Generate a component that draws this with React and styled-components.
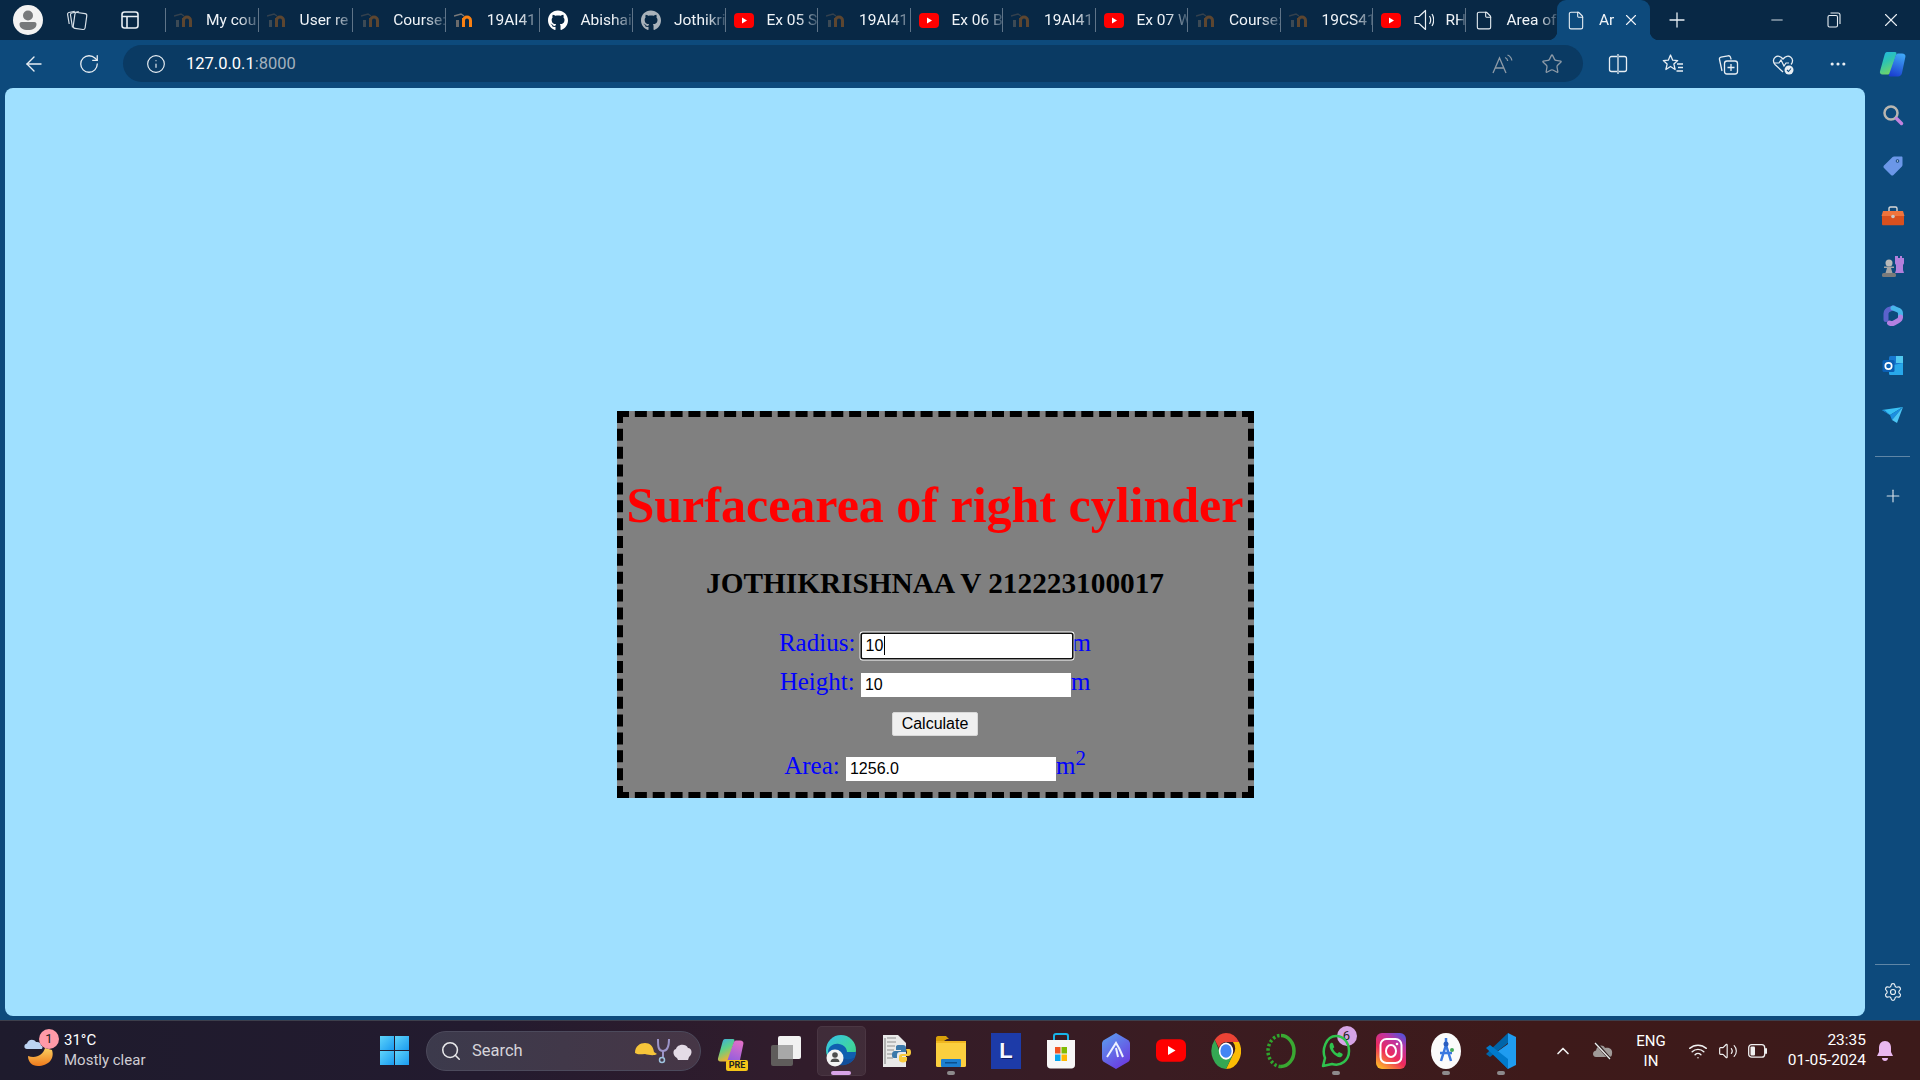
import React from "react";
import styled, { createGlobalStyle } from "styled-components";
import {
  ArrowLeft, RotateCw, Info, Star, Plus, X, Minus, Settings, Search, ChevronUp,
  Wifi, Volume2, File, Ellipsis,
} from "lucide-react";
import { FaGithub } from "react-icons/fa";

const GlobalStyle = createGlobalStyle`
  html, body { margin: 0; padding: 0; height: 100%; overflow: hidden; }
  body { font-family: Roboto, "Liberation Sans", sans-serif; background: #0d4a7c; }
`;

const Page = styled.div`
  width: 1920px;
  height: 1080px;
  display: flex;
  flex-direction: column;
`;

/* ---- tab strip ---- */
const TabStrip = styled.div`
  height: 40px;
  background: #082845;
  display: flex;
  align-items: stretch;
  flex: none;
`;

const StripTools = styled.div`
  width: 164.5px;
  flex: none;
  display: flex;
  align-items: center;
  padding-left: 13px;
  box-sizing: border-box;
`;

const ProfileButton = styled.div`
  width: 30px;
  height: 30px;
  border-radius: 50%;
  background: #f3f3f3;
  display: flex;
  align-items: center;
  justify-content: center;
`;

const StripTool = styled.div`
  display: flex;
  align-items: center;
  justify-content: center;
  width: 24px;
  margin-left: ${(p) => p.$gap}px;
`;

const Tab = styled.div`
  width: ${(p) => p.$width ?? 92.5}px;
  flex: none;
  box-sizing: border-box;
  display: flex;
  align-items: center;
  padding-left: 9px;
  position: relative;
  color: #f0f4f8;
  font-size: 15.5px;

  &::before {
    content: "";
    position: absolute;
    left: 0;
    top: 8px;
    bottom: 8px;
    width: 1px;
    background: #5f7488;
  }
`;

const TabIcon = styled.span`
  width: 20px;
  height: 20px;
  flex: none;
  display: flex;
  align-items: center;
  justify-content: center;
  margin-right: ${(p) => p.$gap ?? 12.5}px;
`;

const TabLabel = styled.span`
  white-space: nowrap;
  overflow: hidden;
  flex: 1;
  min-width: 0;
  -webkit-mask-image: linear-gradient(to right, #000 62%, rgba(0, 0, 0, 0.25) 98%);
  mask-image: linear-gradient(to right, #000 62%, rgba(0, 0, 0, 0.25) 98%);
`;

const ActiveTab = styled.div`
  width: 93px;
  flex: none;
  box-sizing: border-box;
  background: #0d4a7c;
  border-radius: 9px 9px 0 0;
  display: flex;
  align-items: center;
  padding: 0 10px 0 9px;
  position: relative;
  color: #f0f4f8;
  font-size: 15.5px;

  &::before, &::after {
    content: "";
    position: absolute;
    bottom: 0;
    width: 9px;
    height: 9px;
  }
  &::before {
    left: -9px;
    background: radial-gradient(circle at 0 0, transparent 9px, #0d4a7c 9.5px);
  }
  &::after {
    right: -9px;
    background: radial-gradient(circle at 100% 0, transparent 9px, #0d4a7c 9.5px);
  }
`;

const NewTab = styled.div`
  width: 54px;
  flex: none;
  display: flex;
  align-items: center;
  justify-content: center;
`;

const WindowControls = styled.div`
  margin-left: auto;
  display: flex;
  padding-right: 1px;
`;

const WindowControl = styled.div`
  width: 57px;
  display: flex;
  align-items: center;
  justify-content: center;
`;

/* ---- address bar ---- */
const Toolbar = styled.div`
  height: 48px;
  flex: none;
  display: flex;
  align-items: center;
  background: #0d4a7c;
  padding-left: 7px;
  box-sizing: border-box;
`;

const NavButton = styled.div`
  width: 56px;
  display: flex;
  align-items: center;
  justify-content: center;
`;

const AddressBar = styled.div`
  width: 1460px;
  height: 37px;
  margin-left: 7px;
  margin-top: -1px;
  border-radius: 19px;
  background: #0a3a63;
  display: flex;
  align-items: center;
  padding: 0 20px 0 23px;
  box-sizing: border-box;
  flex: none;
`;

const Url = styled.span`
  margin-left: 20px;
  font-size: 16.5px;
  color: #fff;
`;

const UrlPort = styled.span`
  color: #a3b1bd;
`;

const AddressActions = styled.div`
  margin-left: auto;
  display: flex;
  align-items: center;
  gap: 27px;
`;

const ReadAloud = styled.span`
  width: 22px;
  display: flex;
  justify-content: center;
`;

const ToolbarButtons = styled.div`
  display: flex;
  align-items: center;
  margin-left: 7px;
`;

const ToolbarButton = styled.div`
  width: 55px;
  display: flex;
  align-items: center;
  justify-content: center;
`;

/* ---- main area ---- */
const Main = styled.div`
  flex: 1;
  display: flex;
  min-height: 0;
`;

const Viewport = styled.div`
  margin: 0 0 4px 5px;
  width: 1860px;
  flex: none;
  background: #9fe0ff;
  border-radius: 8px;
  padding-top: 323px;
  box-sizing: border-box;
`;

const Card = styled.div`
  width: 637px;
  margin: 0 auto;
  box-sizing: border-box;
  border: 6px dashed #000;
  background: #808080;
  padding: 59px 0 11px;
  text-align: center;
  font-family: "Liberation Serif", "Times New Roman", serif;
`;

const Title = styled.h1`
  margin: 0;
  font-size: 50px;
  line-height: 58px;
  font-weight: bold;
  color: #f00;
  white-space: nowrap;
`;

const Student = styled.h2`
  margin: 32px 0 0;
  font-size: 29.3px;
  line-height: 34px;
  font-weight: bold;
  color: #000;
`;

const FieldRow = styled.div`
  display: flex;
  justify-content: center;
  align-items: baseline;
  margin-top: ${(p) => p.$top}px;
  color: #00f;
  font-size: 25px;
  line-height: 28px;
`;

const FieldLabel = styled.label`
  margin-right: 6.25px;
`;

const FieldBox = styled.span`
  position: relative;
  display: inline-flex;
  align-items: baseline;
`;

const Field = styled.input`
  width: 210px;
  height: 24px;
  box-sizing: border-box;
  border: none;
  padding: 1px 4px;
  margin: 0;
  background: #fff;
  color: #000;
  border-radius: 0;
  font-family: "Liberation Sans", Arial, sans-serif;
  font-size: 16px;
  outline: none;
  ${(p) => p.$focused && `
    border-radius: 1px;
    box-shadow: 0 0 0 1.6px #101010, 0 0 0 2.4px #fff;
    caret-color: transparent;
  `}
`;

const Caret = styled.span`
  position: absolute;
  left: 22px;
  top: 2px;
  width: 1px;
  height: 19px;
  background: #000;
`;

const Super = styled.sup`
  line-height: 0;
  vertical-align: super;
  font-size: 20.8px;
`;

const CalcRow = styled.div`
  margin-top: 15px;
  display: flex;
  justify-content: center;
`;

const CalcButton = styled.button`
  width: 86px;
  height: 24px;
  padding: 0;
  box-sizing: border-box;
  border: 1px solid #d8d8d8;
  border-radius: 2px;
  background: #efefef;
  color: #000;
  font-family: "Liberation Sans", Arial, sans-serif;
  font-size: 16px;
`;

/* ---- edge sidebar ---- */
const Sidebar = styled.div`
  width: 55px;
  flex: none;
  display: flex;
  flex-direction: column;
  align-items: center;
  padding: 3px 0 3px;
  box-sizing: border-box;
`;

const SideItem = styled.div`
  height: 50px;
  width: 100%;
  flex: none;
  display: flex;
  align-items: center;
  justify-content: center;
`;

const SideRule = styled.div`
  width: 35px;
  height: 1px;
  background: #5f86a6;
  flex: none;
  margin: ${(p) => p.$margin};
`;

/* ---- taskbar ---- */
const Taskbar = styled.div`
  height: 60px;
  flex: none;
  box-sizing: border-box;
  border-top: 1px solid #3d3f4c;
  background: linear-gradient(90deg, #1e1b2d 0%, #231b2f 25%, #301c2c 40%, #3a1c22 60%, #3e1a1a 80%, #3c1a1a 100%);
  display: flex;
  align-items: center;
  padding-left: 24px;
  color: #fff;
`;

const Weather = styled.div`
  width: 356px;
  flex: none;
  display: flex;
  align-items: center;
`;

const WeatherIcon = styled.div`
  width: 32px;
  height: 36px;
  flex: none;
  position: relative;
`;

const Badge = styled.span`
  position: absolute;
  top: ${(p) => p.$top}px;
  right: ${(p) => p.$right}px;
  width: 20px;
  height: 20px;
  border-radius: 50%;
  background: ${(p) => p.$color};
  color: #222;
  font-size: 13px;
  line-height: 20px;
  text-align: center;
`;

const WeatherText = styled.div`
  margin: -2px 0 0 8px;
  font-size: 15px;
  line-height: 20px;
`;

const WeatherNote = styled.div`
  color: #cfcdd3;
`;

const StartButton = styled.div`
  width: 29px;
  height: 29px;
  flex: none;
  display: grid;
  grid-template-columns: 1fr 1fr;
  gap: 1.5px;
`;

const StartPane = styled.span`
  background: linear-gradient(135deg, #5fd4fa, #1a9bf0);
`;

const SearchPill = styled.div`
  width: 275px;
  height: 40px;
  flex: none;
  margin-left: 17px;
  box-sizing: border-box;
  border-radius: 20px;
  border: 1px solid #4c4a5c;
  background: linear-gradient(90deg, #3c3a4c, #463646);
  display: flex;
  align-items: center;
  padding-left: 13px;
  color: #d6d4da;
  font-size: 16.5px;
`;

const SearchText = styled.span`
  margin-left: 10px;
`;

const SearchDoodle = styled.span`
  margin-left: auto;
  margin-right: 5px;
  display: flex;
`;

const Dock = styled.div`
  display: flex;
  margin-left: 2.5px;
`;

const DockSlot = styled.div`
  width: 55px;
  height: 50px;
  flex: none;
  display: flex;
  align-items: center;
  justify-content: center;
  position: relative;

  & > svg {
    position: relative;
    z-index: 1;
  }
  ${(p) => p.$active && `
    &::before {
      content: "";
      position: absolute;
      left: 3px;
      right: 3px;
      top: 0;
      bottom: 0;
      background: rgba(255, 255, 255, 0.07);
      border: 1px solid rgba(255, 255, 255, 0.05);
      border-radius: 5px;
    }
  `}
  ${(p) => (p.$active || p.$running) && `
    &::after {
      content: "";
      position: absolute;
      left: 50%;
      bottom: 1px;
      height: 4px;
      border-radius: 2px;
      width: ${p.$active ? 20 : 8}px;
      margin-left: ${p.$active ? -10 : -4}px;
      background: ${p.$active ? "#d9a4e8" : "#8d8a8c"};
    }
  `}
`;

const PreWrap = styled.span`
  position: relative;
  display: flex;
`;

const PreTag = styled.span`
  position: absolute;
  right: -2px;
  bottom: -5px;
  width: 22px;
  height: 11px;
  background: #f5c518;
  color: #222;
  border-radius: 2px;
  font-size: 9px;
  font-weight: 700;
  line-height: 11px;
  text-align: center;
`;

const LetterTile = styled.span`
  width: 30px;
  height: 36px;
  background: #1d3ba8;
  color: #f6f8ff;
  font-family: "Liberation Sans", Arial, sans-serif;
  font-weight: 700;
  font-size: 22px;
  line-height: 36px;
  text-align: center;
  text-shadow: 1px 1px 0 #0b1c66;
`;

const Tray = styled.div`
  margin-left: auto;
  display: flex;
  align-items: center;
  padding-right: 16px;
`;

const TraySlot = styled.div`
  width: ${(p) => p.$width}px;
  flex: none;
  display: flex;
  align-items: center;
  justify-content: center;
`;

const TrayText = styled.div`
  width: 56px;
  margin-right: 4px;
  flex: none;
  text-align: center;
  font-size: 15px;
  line-height: 20px;
`;

const Clock = styled.div`
  width: 93px;
  margin-top: -2px;
  flex: none;
  text-align: right;
  font-size: 15.5px;
  line-height: 20px;
`;

/* ---- drawn icons ---- */
const MoodleIcon = ({ bright }) => (
  <svg width="20" height="16" viewBox="0 0 20 16" fill="none">
    <path d="M3.5 15V8" stroke={bright ? "#6b6b6b" : "#3c4a55"} strokeWidth="3" />
    <path d="M0 4l7-2 3 2" stroke={bright ? "#7a7a7a" : "#34414d"} strokeWidth="1.4" />
    <path d="M9.500 15V8.500a3.500 3.500 0 0 1 7 0V15" stroke={bright ? "#f98012" : "#5d4630"} strokeWidth="3" />
    <path d="M9.500 6V15" stroke={bright ? "#f98012" : "#5d4630"} strokeWidth="3" />
  </svg>
);

const YoutubeIcon = ({ w = 20, h = 15 }) => (
  <svg width={w} height={h} viewBox="0 0 20 15">
    <rect width="20" height="15" rx="4" fill="#f00" />
    <path d="M8 4.5v6l5-3z" fill="#fff" />
  </svg>
);

const SpeakerIcon = () => (
  <svg width="20" height="22" viewBox="0 0 20 22" fill="none" stroke="#e8eef3" strokeWidth="1.2">
    <path d="M1 7.500h4L11.500 1.500v19L5 14.500H1z" strokeLinejoin="round" />
    <path d="M15.500 7c1.500 2.500 1.500 5.500 0 8" />
    <path d="M18 5c2 3.500 2 8.500 0 12" />
  </svg>
);

const RestoreIcon = () => (
  <svg width="14" height="16" viewBox="0 0 14 16" fill="none" stroke="#e8eef3" strokeWidth="1.1">
    <rect x="1" y="3.5" width="9.5" height="11.5" rx="1.5" />
    <path d="M3.5 1h7.5a2 2 0 0 1 2 2v9" />
  </svg>
);

const CollectionsIcon = () => (
  <svg width="22" height="24" viewBox="0 0 22 24" fill="none" stroke="#d7e0e8" strokeWidth="1.2">
    <rect x="8" y="5" width="12" height="16" rx="2" transform="rotate(8 14 13)" />
    <path d="M6.5 19.5L4.5 7c-.2-1 .4-1.8 1.3-2l7-1.3" />
    <path d="M3.2 16L1.6 6.4c-.2-1 .3-1.7 1.2-1.9l6-1.2" />
  </svg>
);

const VerticalTabsIcon = () => (
  <svg width="20" height="20" viewBox="0 0 20 20" fill="none" stroke="#e8eef3" strokeWidth="1.6">
    <rect x="2" y="2" width="16" height="16" rx="2.5" />
    <path d="M2 6.5h16M7 6.5V18" />
  </svg>
);

const ProfileGlyph = () => (
  <svg width="20" height="22" viewBox="0 0 20 22" fill="#77797b">
    <circle cx="10" cy="6.5" r="5" />
    <path d="M1.5 15c0-1.2 1-2 2.2-2h12.6c1.2 0 2.2.8 2.2 2 0 4-3.6 6-8.5 6s-8.5-2-8.5-6z" />
  </svg>
);

const ReadAloudIcon = () => (
  <svg width="22" height="20" viewBox="0 0 22 20" fill="none" stroke="#8d9aa7" strokeWidth="1.3">
    <path d="M1 19L7.5 4 14 19M3.5 14h8" />
    <path d="M13 3.5c1.5.5 2.5 2 2.7 3.5M15.5 1c2.4 1 4 3 4.3 5.5" />
  </svg>
);

const SplitIcon = () => (
  <svg width="20" height="22" viewBox="0 0 20 22" fill="none" stroke="#e8eef3" strokeWidth="1.3">
    <path d="M9 3.5H3.5a2 2 0 0 0-2 2v11a2 2 0 0 0 2 2H9M11 3.5h5.5a2 2 0 0 1 2 2v11a2 2 0 0 1-2 2H11" />
    <path d="M10 1v20" />
  </svg>
);

const FavoritesIcon = () => (
  <svg width="22" height="22" viewBox="0 0 22 22" fill="none" stroke="#e8eef3" strokeWidth="1.3">
    <path d="M8.5 2l2.2 5.2 5 .4-3.8 3.5 1.2 5.4-4.6-3-4.6 3 1.2-5.4L1.3 7.6l5-.4z" strokeLinejoin="round" />
    <path d="M15 11h6M16 14.5h5M14.5 18h6.5" />
  </svg>
);

const CollectionAddIcon = () => (
  <svg width="22" height="22" viewBox="0 0 22 22" fill="none" stroke="#e8eef3" strokeWidth="1.3">
    <path d="M5 18L2.5 6.5c-.3-1.2.4-2.2 1.5-2.4l7-1.3c1-.2 2 .3 2.4 1.3l.8 2.4" />
    <rect x="7.5" y="8" width="13" height="13" rx="2.5" />
    <path d="M14 11v7M10.5 14.5h7" />
  </svg>
);

const HealthIcon = () => (
  <svg width="22" height="22" viewBox="0 0 22 22" fill="none">
    <path d="M11 19L3 11.5C.8 9.3 1 5.8 3.2 4.2c2.3-1.7 5.500-1 7.800 1.800 2.300-2.800 5.500-3.500 7.800-1.800 2.200 1.600 2.400 5.100.2 7.300" stroke="#e8eef3" strokeWidth="1.3" />
    <path d="M2 10h5l2-3 3 6 2-3h3" stroke="#e8eef3" strokeWidth="1.2" />
    <circle cx="17" cy="17" r="4.5" fill="#e8eef3" />
    <path d="M15 17l1.5 1.500 2.500-3" stroke="#0d4a7c" strokeWidth="1.1" />
  </svg>
);

const CopilotLogo = ({ id, size = 30, left, right }) => (
  <svg width={size} height={size} viewBox="0 0 30 30">
    <defs>
      <linearGradient id={`${id}a`} x1="0" y1="0" x2="0.4" y2="1">
        {left.map((c, i) => <stop key={c} offset={i / (left.length - 1)} stopColor={c} />)}
      </linearGradient>
      <linearGradient id={`${id}b`} x1="0.6" y1="0" x2="0.3" y2="1">
        {right.map((c, i) => <stop key={c} offset={i / (right.length - 1)} stopColor={c} />)}
      </linearGradient>
    </defs>
    <path d="M9 3h8c1.500 0 1.800 1 1.300 2.300L13 23c-.6 1.800-1.500 2.500-3 2.500H4.500C2.500 25.500 1.500 24 2 22.300L6.500 6C7 4 7.800 3 9 3z" fill={`url(#${id}a)`} />
    <path d="M20 4.500h4c2.500 0 3.800 1.300 3.400 3.200L24 24c-.5 2.300-2 3.500-4 3.500h-8c-1.200 0-1.500-.8-1-2L17.500 7c.5-1.500 1.300-2.500 2.500-2.500z" fill={`url(#${id}b)`} />
  </svg>
);

const SideSearch = () => (
  <svg width="22" height="22" viewBox="0 0 22 22" fill="none">
    <circle cx="9" cy="8" r="6.5" stroke="#b9b6b0" strokeWidth="2.5" />
    <path d="M14.5 13.5l5 5" stroke="#c283de" strokeWidth="3.5" strokeLinecap="round" />
  </svg>
);

const SideTag = () => (
  <svg width="22" height="22" viewBox="0 0 22 22">
    <path d="M12 1.500h7.500c.6 0 1 .4 1 1v7.500c0 .5-.2 1-.6 1.400L11.500 20c-.8.8-1.800.8-2.500 0l-7-7c-.7-.7-.7-1.800 0-2.500l8.600-8.500c.4-.3.9-.5 1.400-.5z" fill="#6b97e8" />
    <circle cx="15.5" cy="6" r="1.8" fill="#14467a" />
    <circle cx="15.5" cy="6" r="0.8" fill="#d7e6ff" />
  </svg>
);

const SideToolbox = () => (
  <svg width="24" height="20" viewBox="0 0 24 20">
    <path d="M8 5V2.500C8 1.500 8.700 1 9.500 1h5c.8 0 1.500.5 1.500 1.500V5" fill="none" stroke="#d8d8d8" strokeWidth="1.4" />
    <path d="M2 5h20l1.500 5H.5z" fill="#f0743c" />
    <path d="M1 10h22v8c0 .8-.5 1.300-1.300 1.300H2.300C1.500 19.300 1 18.800 1 18z" fill="#d9501e" />
    <circle cx="12" cy="10.5" r="1.8" fill="#c9c9c9" />
  </svg>
);

const SideChess = () => (
  <svg width="24" height="24" viewBox="0 0 24 24">
    <path d="M15 2h2v2h2V2h2v2h2V1v8c0 1-.8 1.500-1 2v5l1 3h-9l1-3v-5c-.3-.5-1-1-1-2V2z" fill="#b27fdc" />
    <circle cx="8" cy="9" r="3.5" fill="#b9b9b9" />
    <path d="M3 12.500h10v1.500H3zM6 14h4l1.500 5h-7z" fill="#a5a5a5" />
    <rect x="1" y="19" width="14" height="4" rx="1.5" fill="#7a7a7a" />
  </svg>
);

const SideDesigner = () => (
  <svg width="22" height="22" viewBox="0 0 22 22" fill="none" strokeWidth="5" strokeLinecap="round">
    <path d="M4 14.500V8.500C4 6 6 4.500 8.500 3.800l3-1" stroke="#5b62cc" />
    <path d="M11 3l5.500 2.200C18 6 18.500 7 18.500 8.500V11" stroke="#47b6ea" />
    <path d="M18.500 12c0 2-1 3-2.500 3.800L12 18c-1.500.8-3 .8-4.500 0" stroke="#b480e2" />
  </svg>
);

const SideOutlook = () => (
  <svg width="22" height="22" viewBox="0 0 22 22">
    <rect x="7" y="1" width="14" height="19" rx="1.5" fill="#1777cf" />
    <path d="M7 11l14-3v12H8.500C7.700 20 7 19.300 7 18.500z" fill="#28a8ea" />
    <path d="M14 1h7v7h-7z" fill="#50c8f0" />
    <rect x="0.5" y="5" width="12" height="12" rx="1.5" fill="#0a5fb4" />
    <circle cx="6.5" cy="11" r="3.2" fill="none" stroke="#fff" strokeWidth="1.7" />
  </svg>
);

const SideSend = () => (
  <svg width="22" height="18" viewBox="0 0 22 18">
    <path d="M0 3l21-3-13 8z" fill="#38c0f4" />
    <path d="M21 0L8 8l2 5z" fill="#1c8fe0" />
    <path d="M21 0l-6 16-5-3z" fill="#4cc6f5" />
    <path d="M8 8L3 3.500 0 3z" fill="#1470c0" />
  </svg>
);

const WeatherGlyph = () => (
  <svg width="32" height="36" viewBox="0 0 32 36">
    <defs>
      <linearGradient id="moon" x1="0" y1="0" x2="0" y2="1">
        <stop offset="0" stopColor="#fbd060" />
        <stop offset="1" stopColor="#ee7a1c" />
      </linearGradient>
    </defs>
    <path d="M4 23C12 26 19 22 21 15L28 17C31 26 24 33 14 33 8 33 4 29 4 23z" fill="url(#moon)" />
    <path d="M3 16c-3.500 0-3.500-5 0-5.500C4 6 10 5.500 12 9c3-.5 5 1 5 3.500 2 .5 2 3.500 0 3.500z" fill="#bcd3f2" />
  </svg>
);

const Doodle = () => (
  <svg width="62" height="26" viewBox="0 0 62 26" fill="none">
    <path d="M2 15c0-7 5-10 10-10s8 3 9 9l3 2c-3 2-8 1-12 0-4 0-7 1-10-1z" fill="#f6c53a" />
    <path d="M25 1c0 7 0 12 5 12s6-6 6-12" stroke="#9c94c8" strokeWidth="2" />
    <path d="M30 13v6" stroke="#9c94c8" strokeWidth="2" />
    <circle cx="29" cy="22" r="2.5" stroke="#9ec3de" strokeWidth="1.5" />
    <path d="M44 20c-4-2-5-8-1-9 1-5 10-6 12-1 4 0 5 6 1 9l-1 3H45z" fill="#e4dbe6" />
  </svg>
);

const TaskViewIcon = () => (
  <svg width="30" height="30" viewBox="0 0 30 30">
    <rect x="0" y="9" width="22" height="21" rx="2" fill="#5f5c5b" />
    <rect x="7" y="0" width="23" height="23" rx="2" fill="#f2f2f2" />
    <rect x="7" y="9" width="15" height="14" fill="#a8a8a8" />
  </svg>
);

const EdgeIcon = () => (
  <svg width="30" height="32" viewBox="0 0 30 32">
    <defs>
      <linearGradient id="edge" x1="0" y1="0" x2="1" y2="1">
        <stop offset="0" stopColor="#34c1ed" />
        <stop offset="0.6" stopColor="#3fd4a0" />
        <stop offset="1" stopColor="#2ec27e" />
      </linearGradient>
    </defs>
    <circle cx="15" cy="15" r="15" fill="url(#edge)" />
    <path d="M2 16c1-5 6-8 11-7 6 1 8 5 8 8H30c0 8-6 13-15 13C7 30 2 24 2 16z" fill="#0f5fb0" />
    <path d="M13 30c5 1 13-1 16-8-4 3-9 3-12 1z" fill="#124f9c" />
    <circle cx="9" cy="23" r="8.5" fill="#f3f3f3" />
    <circle cx="9" cy="20" r="2.8" fill="#4d4d4d" />
    <path d="M4.500 27c0-2.500 2-3.500 4.500-3.500s4.500 1 4.500 3.500z" fill="#4d4d4d" />
  </svg>
);

const PythonFileIcon = () => (
  <svg width="30" height="32" viewBox="0 0 30 32">
    <path d="M2 0h15l8 8v24H2z" fill="#e9e9e9" />
    <path d="M4 3v26M6 3h9M6 7h9M6 11h8M6 15h7M6 19h6M6 23h6" stroke="#8f8f8f" strokeWidth="1.2" />
    <path d="M17 10h5c2 0 3 1 3 3v4h-6c-2 0-3 1-3 3v3h-3c-1.500 0-2-1-2-3 0-3 1-4 3-4h6v-1h-5v-3c0-1 .5-2 2-2z" fill="#3b79ab" />
    <path d="M25 14h3c1.500 0 2 1.500 2 3.500s-1 3.500-3 3.500h-6v1h5v3c0 1.500-2 2.500-4 2.500s-4-1-4-2.500V22c0-2 1-3 3-3h4c1 0 1-1 1-2z" fill="#f8ca3c" />
  </svg>
);

const ExplorerIcon = () => (
  <svg width="30" height="32" viewBox="0 0 30 32">
    <path d="M0 3c0-1 .8-2 2-2h8l3 3h-2l-3 2H0z" fill="#d9a00a" />
    <rect x="0" y="6" width="30" height="26" rx="1.5" fill="#fbcf3f" />
    <path d="M0 6h30v2H0z" fill="#f0b720" />
    <rect x="5" y="24" width="20" height="8" rx="1" fill="#1c7fd0" />
    <rect x="9" y="27" width="12" height="1.5" fill="#0b4f8c" />
  </svg>
);

const StoreIcon = () => (
  <svg width="30" height="36" viewBox="0 0 30 36">
    <path d="M8 8V3c0-1 .6-2 2-2h10c1.400 0 2 1 2 2v5" fill="none" stroke="#18b4ea" strokeWidth="2" />
    <path d="M1 7h28v25c0 2-1.500 3.500-3.500 3.500h-21C2.500 35.500 1 34 1 32z" fill="#f7f7f7" />
    <rect x="9" y="14" width="5.5" height="6.5" fill="#f05423" />
    <rect x="15.5" y="14" width="5.5" height="6.5" fill="#80bb02" />
    <rect x="9" y="21.5" width="5.5" height="6.5" fill="#06a6f0" />
    <rect x="15.5" y="21.5" width="5.5" height="6.5" fill="#ffb902" />
  </svg>
);

const HexIcon = () => (
  <svg width="28" height="36" viewBox="0 0 28 36">
    <defs>
      <linearGradient id="hex" x1="0" y1="0" x2="0.6" y2="1">
        <stop offset="0" stopColor="#5aa3f0" />
        <stop offset="1" stopColor="#6a3fe0" />
      </linearGradient>
    </defs>
    <path d="M14 0l12 7c1 .6 2 2 2 3.500v15c0 1.500-1 3-2 3.500l-12 7-12-7c-1-.5-2-2-2-3.500v-15C0 9 1 7.600 2 7z" fill="url(#hex)" />
    <path d="M5 24l9-14 3 5M16 24l-2-9M21 24l-4-9" fill="none" stroke="#eef2ff" strokeWidth="2" />
  </svg>
);

const ChromeIcon = () => (
  <svg width="30" height="36" viewBox="0 0 48 48" preserveAspectRatio="none">
    <path d="M24 0a24 24 0 0 1 20.800 12H24a12 12 0 0 0-11.300 8L6 9A24 24 0 0 1 24 0z" fill="#ea4335" />
    <path d="M44.800 12A24 24 0 0 1 24 48l10.400-18a12 12 0 0 0 .6-18z" fill="#fbbc04" />
    <path d="M24 48A24 24 0 0 1 6 9l10 20a12 12 0 0 0 18.400 1z" fill="#34a853" />
    <circle cx="24" cy="24" r="11.5" fill="#fff" />
    <circle cx="24" cy="24" r="9" fill="#4285f4" />
  </svg>
);

const RingIcon = () => (
  <svg width="30" height="36" viewBox="0 0 30 36" fill="none" strokeWidth="3.5">
    <path d="M15 2.500c7 0 13 7 13 15.500s-6 15.500-13 15.500" stroke="#3aa832" />
    <path d="M15 33.500C8 33.500 2 26.500 2 18S8 2.500 15 2.500" stroke="#2fa52c" strokeDasharray="2.5 2" />
  </svg>
);

const WhatsappIcon = () => (
  <svg width="30" height="34" viewBox="0 0 30 34" fill="none">
    <path d="M2 32l2-8C.5 16 5 2 15 2c8 0 13 7 13 15 0 9-8 16-17 13z" stroke="#2fc24d" strokeWidth="2.5" strokeLinejoin="round" />
    <path d="M10 9c-2 1-2 5 1 9s7 6 9 5 2-3 1-3.500l-3-1.500-1.500 1.500c-2-.5-4-3-4.500-5l1.300-1.300L12 9.500c-.5-1-1.300-.8-2-.5z" fill="#2fc24d" />
  </svg>
);

const InstagramIcon = () => (
  <svg width="30" height="36" viewBox="0 0 30 36" fill="none">
    <defs>
      <linearGradient id="insta" x1="0.2" y1="1" x2="0.8" y2="0">
        <stop offset="0" stopColor="#fdb32a" />
        <stop offset="0.4" stopColor="#ee2a5b" />
        <stop offset="0.75" stopColor="#c1349f" />
        <stop offset="1" stopColor="#5b50d6" />
      </linearGradient>
    </defs>
    <rect width="30" height="36" rx="6" fill="url(#insta)" />
    <rect x="4.5" y="6" width="21" height="24" rx="6" stroke="#fff" strokeWidth="2" />
    <ellipse cx="15" cy="18" rx="5" ry="6" stroke="#fff" strokeWidth="2" />
    <circle cx="21" cy="11" r="1.3" fill="#fff" />
  </svg>
);

const AndroidStudioIcon = () => (
  <svg width="30" height="36" viewBox="0 0 30 36">
    <ellipse cx="15" cy="18" rx="15" ry="18" fill="#fbfbfb" />
    <path d="M15 5v5M10 28l5-16 5 16M9 20h12" fill="none" stroke="#3b78e0" strokeWidth="2.5" />
    <circle cx="15" cy="11" r="2.5" fill="#2a5cc0" />
    <circle cx="21" cy="17" r="2" fill="#45a85a" />
  </svg>
);

const VscodeIcon = () => (
  <svg width="30" height="36" viewBox="0 0 30 36">
    <path d="M22 0l8 4v28l-8 4L8 21l14-10z" fill="#1f9cf0" />
    <path d="M22 0L0 21l4 3 18-14z" fill="#0065a9" />
    <path d="M0 15l4-3 18 14v10z" fill="#007acc" />
  </svg>
);

const CloudOffIcon = () => (
  <svg width="22" height="18" viewBox="0 0 22 18">
    <path d="M4 15c-4 0-4-6 0-6.500C5 3 11 2 13 6c5-1 8 2 7 6 0 2-1 3-3 3z" fill="#a09a98" />
    <path d="M4 1l14 16" stroke="#2c1c1c" strokeWidth="3" />
    <path d="M3 1l15 16" stroke="#f0f0f0" strokeWidth="1.2" />
  </svg>
);

const BatteryIcon = () => (
  <svg width="20" height="16" viewBox="0 0 20 16" fill="none">
    <rect x="0.7" y="1.7" width="16" height="12.5" rx="3" stroke="#f0f0f0" strokeWidth="1.3" />
    <rect x="2.5" y="3.5" width="4.5" height="9" rx="1" fill="#f0f0f0" />
    <path d="M18 6v4" stroke="#f0f0f0" strokeWidth="2" strokeLinecap="round" />
  </svg>
);

const BellIcon = () => (
  <svg width="18" height="22" viewBox="0 0 18 22">
    <path d="M9 1c-4 0-6 3-6 7v4l-2 4h16l-2-4V8c0-4-2-7-6-7z" fill="#eab8f0" />
    <path d="M6 18h6c0 2-1.500 3-3 3s-3-1-3-3z" fill="#eab8f0" />
  </svg>
);

const tabs = [
  { icon: <MoodleIcon />, label: "My cou", width: 93.6 },
  { icon: <MoodleIcon />, label: "User re", width: 93.6 },
  { icon: <MoodleIcon />, label: "Course:", width: 93.6 },
  { icon: <MoodleIcon bright />, label: "19AI41", width: 93.6 },
  { icon: <FaGithub size={21} color="#fff" />, label: "Abishai", width: 93.6 },
  { icon: <FaGithub size={21} color="#a9b2ba" />, label: "Jothikri" },
  { icon: <YoutubeIcon />, label: "Ex 05 S" },
  { icon: <MoodleIcon />, label: "19AI41" },
  { icon: <YoutubeIcon />, label: "Ex 06 B" },
  { icon: <MoodleIcon />, label: "19AI41" },
  { icon: <YoutubeIcon />, label: "Ex 07 W" },
  { icon: <MoodleIcon />, label: "Course:" },
  { icon: <MoodleIcon />, label: "19CS41" },
];

const sideIcons = [
  <SideSearch />, <SideTag />, <SideToolbox />, <SideChess />, <SideDesigner />, <SideOutlook />, <SideSend />,
];

const App = () => (
  <Page>
    <GlobalStyle />
    <TabStrip>
      <StripTools>
        <ProfileButton><ProfileGlyph /></ProfileButton>
        <StripTool $gap={22}><CollectionsIcon /></StripTool>
        <StripTool $gap={29}><VerticalTabsIcon /></StripTool>
      </StripTools>
      {tabs.map((t, i) => (
        <Tab key={i} $width={t.width}>
          <TabIcon>{t.icon}</TabIcon>
          <TabLabel>{t.label}</TabLabel>
        </Tab>
      ))}
      <Tab>
        <TabIcon $gap={13}><YoutubeIcon /></TabIcon>
        <TabIcon $gap={11}><SpeakerIcon /></TabIcon>
        <TabLabel>RH</TabLabel>
      </Tab>
      <Tab>
        <TabIcon><File size={21} color="#e8eef3" strokeWidth={1.3} /></TabIcon>
        <TabLabel>Area of</TabLabel>
      </Tab>
      <ActiveTab>
        <TabIcon><File size={21} color="#e8eef3" strokeWidth={1.3} /></TabIcon>
        <TabLabel>Ar</TabLabel>
        <X size={18} color="#f2f5f8" strokeWidth={1.5} />
      </ActiveTab>
      <NewTab><Plus size={24} color="#e8eef3" strokeWidth={1.3} /></NewTab>
      <WindowControls>
        <WindowControl><Minus size={18} color="#e8eef3" strokeWidth={1.2} /></WindowControl>
        <WindowControl><RestoreIcon /></WindowControl>
        <WindowControl><X size={22} color="#e8eef3" strokeWidth={1.2} /></WindowControl>
      </WindowControls>
    </TabStrip>

    <Toolbar>
      <NavButton><ArrowLeft size={24} color="#e8eef3" strokeWidth={1.4} /></NavButton>
      <NavButton><RotateCw size={22} color="#e8eef3" strokeWidth={1.4} /></NavButton>
      <AddressBar>
        <Info size={20} color="#e8eef3" strokeWidth={1.4} />
        <Url>127.0.0.1<UrlPort>:8000</UrlPort></Url>
        <AddressActions>
          <ReadAloud><ReadAloudIcon /></ReadAloud>
          <Star size={22} color="#8d9aa7" strokeWidth={1.4} />
        </AddressActions>
      </AddressBar>
      <ToolbarButtons>
        <ToolbarButton><SplitIcon /></ToolbarButton>
        <ToolbarButton><FavoritesIcon /></ToolbarButton>
        <ToolbarButton><CollectionAddIcon /></ToolbarButton>
        <ToolbarButton><HealthIcon /></ToolbarButton>
        <ToolbarButton><Ellipsis size={20} color="#e8eef3" strokeWidth={1.8} /></ToolbarButton>
        <ToolbarButton>
          <CopilotLogo id="bar" left={["#1fb6e8", "#2fc4b0", "#6fd46a"]} right={["#3fa5f5", "#1a3fd0"]} />
        </ToolbarButton>
      </ToolbarButtons>
    </Toolbar>

    <Main>
      <Viewport>
        <Card>
          <Title>Surfacearea of right cylinder</Title>
          <Student>JOTHIKRISHNAA V 212223100017</Student>
          <FieldRow $top={29}>
            <FieldLabel>Radius:</FieldLabel>
            <FieldBox>
              <Field $focused readOnly value="10" />
              <Caret />
            </FieldBox>
            <span>m</span>
          </FieldRow>
          <FieldRow $top={10}>
            <FieldLabel>Height:</FieldLabel>
            <FieldBox><Field readOnly value="10" /></FieldBox>
            <span>m</span>
          </FieldRow>
          <CalcRow><CalcButton>Calculate</CalcButton></CalcRow>
          <FieldRow $top={16}>
            <FieldLabel>Area:</FieldLabel>
            <FieldBox><Field readOnly value="1256.0" /></FieldBox>
            <span>m<Super>2</Super></span>
          </FieldRow>
        </Card>
      </Viewport>
      <Sidebar>
        {sideIcons.map((icon, i) => <SideItem key={i}>{icon}</SideItem>)}
        <SideRule $margin="15px 0 14px" />
        <SideItem><Plus size={20} color="#d6dfe7" strokeWidth={1.4} /></SideItem>
        <SideRule $margin="auto 0 2px" />
        <SideItem><Settings size={20} color="#e8eef3" strokeWidth={1.4} /></SideItem>
      </Sidebar>
    </Main>

    <Taskbar>
      <Weather>
        <WeatherIcon>
          <WeatherGlyph />
          <Badge $top={-4} $right={-3} $color="#ff9aa8">1</Badge>
        </WeatherIcon>
        <WeatherText>
          31°C
          <WeatherNote>Mostly clear</WeatherNote>
        </WeatherText>
      </Weather>
      <StartButton>
        <StartPane /><StartPane /><StartPane /><StartPane />
      </StartButton>
      <SearchPill>
        <Search size={22} color="#e8e8ea" strokeWidth={1.7} />
        <SearchText>Search</SearchText>
        <SearchDoodle><Doodle /></SearchDoodle>
      </SearchPill>
      <Dock>
        <DockSlot>
          <PreWrap>
            <CopilotLogo id="dock" left={["#3aa8e8", "#5cd08a", "#f5b030"]} right={["#e070c8", "#8a5ce0"]} />
            <PreTag>PRE</PreTag>
          </PreWrap>
        </DockSlot>
        <DockSlot><TaskViewIcon /></DockSlot>
        <DockSlot $active><EdgeIcon /></DockSlot>
        <DockSlot><PythonFileIcon /></DockSlot>
        <DockSlot $running><ExplorerIcon /></DockSlot>
        <DockSlot><LetterTile>L</LetterTile></DockSlot>
        <DockSlot><StoreIcon /></DockSlot>
        <DockSlot><HexIcon /></DockSlot>
        <DockSlot><YoutubeIcon w={30} h={25} /></DockSlot>
        <DockSlot><ChromeIcon /></DockSlot>
        <DockSlot><RingIcon /></DockSlot>
        <DockSlot $running>
          <WhatsappIcon />
          <Badge $top={0} $right={7} $color="#d6a4e6">6</Badge>
        </DockSlot>
        <DockSlot><InstagramIcon /></DockSlot>
        <DockSlot $running><AndroidStudioIcon /></DockSlot>
        <DockSlot $running><VscodeIcon /></DockSlot>
      </Dock>
      <Tray>
        <TraySlot $width={40}><ChevronUp size={20} color="#f0f0f0" strokeWidth={2} /></TraySlot>
        <TraySlot $width={40}><CloudOffIcon /></TraySlot>
        <TrayText>ENG<br />IN</TrayText>
        <TraySlot $width={30}><Wifi size={20} color="#f0f0f0" strokeWidth={1.7} /></TraySlot>
        <TraySlot $width={30}><Volume2 size={20} color="#f0f0f0" strokeWidth={1.4} /></TraySlot>
        <TraySlot $width={30}><BatteryIcon /></TraySlot>
        <Clock>23:35<br />01-05-2024</Clock>
        <TraySlot $width={38}><BellIcon /></TraySlot>
      </Tray>
    </Taskbar>
  </Page>
);

export default App;
